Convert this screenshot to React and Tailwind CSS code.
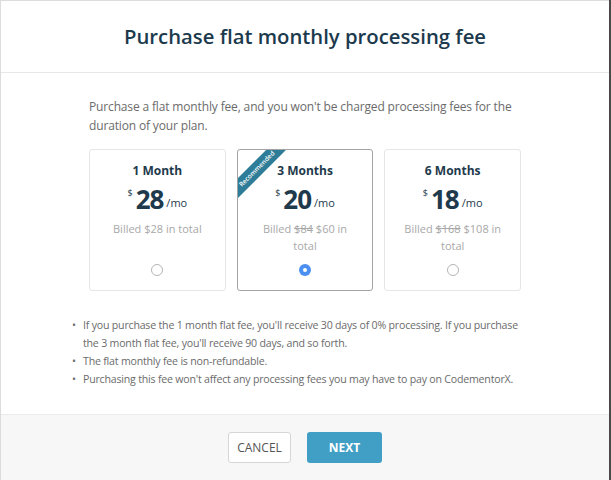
const plans = [
  { label: '1 Month', price: 28, old: null, total: '$28', selected: false },
  { label: '3 Months', price: 20, old: '$84', total: '$60', selected: true, ribbon: true },
  { label: '6 Months', price: 18, old: '$168', total: '$108', selected: false },
];

const notes = [
  "If you purchase the 1 month flat fee, you'll receive 30 days of 0% processing. If you purchase the 3 month flat fee, you'll receive 90 days, and so forth.",
  'The flat monthly fee is non-refundable.',
  "Purchasing this fee won't affect any processing fees you may have to pay on CodementorX.",
];

function PlanCard({ plan }) {
  return (
    <div
      className={`relative overflow-hidden w-[138px] h-[142px] rounded-[3px] border bg-white flex flex-col items-center pt-[12px] ${
        plan.selected ? 'border-[#a3a3a3]' : 'border-[#e6e6e6]'
      }`}
    >
      {plan.ribbon && (
        <div className="absolute left-[-31px] top-[12px] w-[100px] h-[14px] bg-[#2e7d98] -rotate-45 flex items-center justify-center text-[6.5px] leading-none text-white font-semibold">
          Recommended
        </div>
      )}
      <div className="text-[12px] font-bold text-[#1e3a4c] leading-[18px]">{plan.label}</div>
      <div className="flex items-start mt-[6px] text-[#1e3a4c]">
        <span className="text-[9px] leading-none mt-[2px] mr-[3px]">$</span>
        <span className="text-[26px] font-bold leading-[27px] tracking-[-1px]">{plan.price}</span>
        <span className="text-[11px] leading-none mt-[11px] ml-[3px]">/mo</span>
      </div>
      <div className="mt-[7px] px-[16px] text-center text-[11px] leading-[17px] text-[#a8a8a8]">
        Billed {plan.old && <span className="line-through">{plan.old}</span>} {plan.total} in total
      </div>
      <div className="flex-1" />
      <div className="mb-[14px]">
        {plan.selected ? (
          <div className="w-[12px] h-[12px] rounded-full bg-[#4b90f0] flex items-center justify-center">
            <div className="w-[4px] h-[4px] rounded-full bg-white" />
          </div>
        ) : (
          <div className="w-[12px] h-[12px] rounded-full border border-[#b5b5b5] bg-white" />
        )}
      </div>
    </div>
  );
}

export default function App() {
  return (
    <div className="w-[611px] h-[480px] bg-[#4a4a4a] flex" style={{ fontFamily: '"Open Sans", "Liberation Sans", sans-serif' }}>
      <div className="w-[609px] h-[480px] bg-white border-l border-t border-[#dcdcdc] flex flex-col">
        <div className="h-[72px] flex items-center justify-center border-b border-[#e8e8e8]">
          <h1 className="text-[20.3px] font-semibold text-[#1c3a4d]">Purchase flat monthly processing fee</h1>
        </div>
        <div className="flex-1 px-[88px] pt-[24px]">
          <p className="text-[12px] tracking-[-0.15px] leading-[19px] text-[#6b6b6b]">
            Purchase a flat monthly fee, and you won't be charged processing fees for the duration of your plan.
          </p>
          <div className="flex gap-[11px] mt-[14px]">
            {plans.map((p) => (
              <PlanCard key={p.label} plan={p} />
            ))}
          </div>
          <ul className="mt-[25px] -ml-[17px] w-[452px] text-[10.6px] tracking-[-0.2px] leading-[18px] text-[#6b6b6b]">
            {notes.map((n) => (
              <li key={n} className="flex">
                <span className="w-[11px] shrink-0">•</span>
                <span>{n}</span>
              </li>
            ))}
          </ul>
        </div>
        <div className="h-[66px] bg-[#f7f7f7] border-t border-[#ebebeb] flex items-center justify-center gap-[16px]">
          <button className="w-[63px] h-[31px] border border-[#d6d6d6] rounded-[3px] bg-white text-[12px] text-[#555]">CANCEL</button>
          <button className="w-[75px] h-[31px] rounded-[3px] bg-[#419fc6] text-[12px] font-bold text-white">NEXT</button>
        </div>
      </div>
    </div>
  );
}
